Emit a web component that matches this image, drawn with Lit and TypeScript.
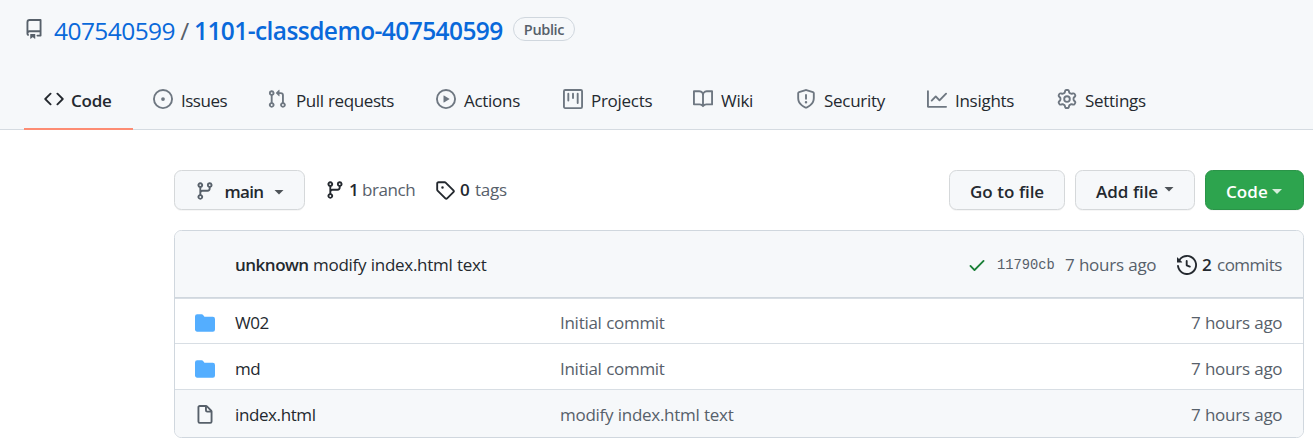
import { LitElement, html, css, svg, nothing } from "lit";
import { customElement, property } from "lit/decorators.js";

const ICONS: Record<string, string> = {
  repo: "M2 2.5A2.5 2.5 0 014.5 0h8.75a.75.75 0 01.75.75v12.5a.75.75 0 01-.75.75h-2.5a.75.75 0 110-1.5h1.75v-2h-8a1 1 0 00-.714 1.7.75.75 0 01-1.072 1.05A2.495 2.495 0 012 11.5v-9zm10.5-1V9h-8c-.356 0-.694.074-1 .208V2.5a1 1 0 011-1h8zM5 12.25v3.25a.25.25 0 00.4.2l1.45-1.087a.25.25 0 01.3 0L8.6 15.7a.25.25 0 00.4-.2v-3.25a.25.25 0 00-.25-.25h-3.5a.25.25 0 00-.25.25z",
  code: "M4.72 3.22a.75.75 0 011.06 1.06L2.06 8l3.72 3.72a.75.75 0 11-1.06 1.06L.47 8.53a.75.75 0 010-1.06l4.25-4.25zm6.56 0a.75.75 0 10-1.06 1.06L13.94 8l-3.72 3.72a.75.75 0 101.06 1.06l4.25-4.25a.75.75 0 000-1.06l-4.25-4.25z",
  issue: "M8 9.5a1.5 1.5 0 100-3 1.5 1.5 0 000 3zM8 0a8 8 0 100 16A8 8 0 008 0zM1.5 8a6.5 6.5 0 1113 0 6.5 6.5 0 01-13 0z",
  pull: "M7.177 3.073L9.573.677A.25.25 0 0110 .854v4.792a.25.25 0 01-.427.177L7.177 3.427a.25.25 0 010-.354zM3.75 2.5a.75.75 0 100 1.5.75.75 0 000-1.5zm-2.25.75a2.25 2.25 0 113 2.122v5.256a2.251 2.251 0 11-1.5 0V5.372A2.25 2.25 0 011.5 3.25zM11 2.5h-1V4h1a1 1 0 011 1v5.628a2.251 2.251 0 101.5 0V5A2.5 2.5 0 0011 2.5zm1 10.25a.75.75 0 111.5 0 .75.75 0 01-1.5 0zM3.75 12a.75.75 0 100 1.5.75.75 0 000-1.5z",
  play: "M1.5 8a6.5 6.5 0 1113 0 6.5 6.5 0 01-13 0zM8 0a8 8 0 100 16A8 8 0 008 0zM6.379 5.227A.25.25 0 006 5.442v5.117a.25.25 0 00.379.214l4.264-2.559a.25.25 0 000-.428L6.379 5.227z",
  project: "M1.75 0A1.75 1.75 0 000 1.75v12.5C0 15.216.784 16 1.75 16h12.5A1.75 1.75 0 0016 14.25V1.75A1.75 1.75 0 0014.25 0H1.75zM1.5 1.75a.25.25 0 01.25-.25h12.5a.25.25 0 01.25.25v12.5a.25.25 0 01-.25.25H1.75a.25.25 0 01-.25-.25V1.75zM11.75 3a.75.75 0 00-.75.75v7.5a.75.75 0 001.5 0v-7.5a.75.75 0 00-.75-.75zm-8.25.75a.75.75 0 011.5 0v5.5a.75.75 0 01-1.5 0v-5.5zM8 3a.75.75 0 00-.75.75v3.5a.75.75 0 001.5 0v-3.5A.75.75 0 008 3z",
  book: "M0 1.75A.75.75 0 01.75 1h4.253c1.227 0 2.317.59 3 1.501A3.744 3.744 0 0111.006 1h4.245a.75.75 0 01.75.75v10.5a.75.75 0 01-.75.75h-4.507a2.25 2.25 0 00-1.591.659l-.622.621a.75.75 0 01-1.06 0l-.622-.621A2.25 2.25 0 005.258 13H.75a.75.75 0 01-.75-.75V1.75zm8.755 3a2.25 2.25 0 012.25-2.25H14.5v9h-3.757c-.71 0-1.4.201-1.992.572l.004-7.322zm-1.504 7.324l.004-5.073-.002-2.253A2.25 2.25 0 005.003 2.5H1.5v9h3.757a3.75 3.75 0 011.994.574z",
  shield: "M7.467.133a1.75 1.75 0 011.066 0l5.25 1.68A1.75 1.75 0 0115 3.48V7c0 1.566-.32 3.182-1.303 4.682-.983 1.498-2.585 2.813-5.032 3.855a1.7 1.7 0 01-1.33 0c-2.447-1.042-4.049-2.357-5.032-3.855C1.32 10.182 1 8.566 1 7V3.48a1.75 1.75 0 011.217-1.667l5.25-1.68zm.61 1.429a.25.25 0 00-.153 0l-5.25 1.68a.25.25 0 00-.174.238V7c0 1.358.275 2.666 1.057 3.86.784 1.194 2.121 2.34 4.366 3.297a.2.2 0 00.154 0c2.245-.956 3.582-2.104 4.366-3.298C13.225 9.666 13.5 8.36 13.5 7V3.48a.25.25 0 00-.174-.237l-5.25-1.68zM9 10.5a1 1 0 11-2 0 1 1 0 012 0zm-.25-5.75a.75.75 0 10-1.5 0v3a.75.75 0 001.5 0v-3z",
  graph: "M1.5 1.75a.75.75 0 00-1.5 0v12.5c0 .414.336.75.75.75h14.5a.75.75 0 000-1.5H1.5V1.75zm14.28 2.53a.75.75 0 00-1.06-1.06L10 7.94 7.53 5.47a.75.75 0 00-1.06 0L3.22 8.72a.75.75 0 001.06 1.06L7 7.06l2.47 2.47a.75.75 0 001.06 0l5.25-5.25z",
  gear: "M7.429 1.525a6.593 6.593 0 011.142 0c.036.003.108.036.137.146l.289 1.105c.147.56.55.967.997 1.189.174.086.341.183.501.29.417.278.97.423 1.53.27l1.102-.303c.11-.03.175.016.195.046.219.31.41.641.573.989.014.031.022.11-.059.19l-.815.806c-.411.406-.562.957-.53 1.456a4.588 4.588 0 010 .582c-.032.499.119 1.05.53 1.456l.815.806c.08.08.073.159.059.19a6.494 6.494 0 01-.573.99c-.02.029-.086.074-.195.045l-1.103-.303c-.559-.153-1.112-.008-1.529.27-.16.107-.327.204-.5.29-.449.222-.851.628-.998 1.189l-.289 1.105c-.029.11-.101.143-.137.146a6.613 6.613 0 01-1.142 0c-.036-.003-.108-.037-.137-.146l-.289-1.105c-.147-.56-.55-.967-.997-1.189a4.502 4.502 0 01-.501-.29c-.417-.278-.97-.423-1.53-.27l-1.102.303c-.11.03-.175-.016-.195-.046a6.492 6.492 0 01-.573-.989c-.014-.031-.022-.11.059-.19l.815-.806c.411-.406.562-.957.53-1.456a4.587 4.587 0 010-.582c.032-.499-.119-1.05-.53-1.456l-.815-.806c-.08-.08-.073-.159-.059-.19a6.44 6.44 0 01.573-.99c.02-.029.086-.075.195-.045l1.103.303c.559.153 1.112.008 1.529-.27.16-.107.327-.204.5-.29.449-.222.851-.628.998-1.189l.289-1.105c.029-.11.101-.143.137-.146zM8 0c-.236 0-.47.01-.701.03-.743.065-1.29.615-1.458 1.261l-.29 1.106c-.017.066-.078.158-.211.224a5.994 5.994 0 00-.668.386c-.123.082-.233.09-.3.071L3.27 2.776c-.644-.177-1.392.02-1.82.63a7.977 7.977 0 00-.704 1.217c-.315.675-.111 1.422.363 1.891l.815.806c.05.048.098.147.088.294a6.084 6.084 0 000 .772c.01.147-.038.246-.088.294l-.815.806c-.474.469-.678 1.216-.363 1.891.2.428.436.835.704 1.218.428.609 1.176.806 1.82.63l1.103-.303c.066-.019.176-.011.299.071.213.143.436.272.668.386.133.066.194.158.212.224l.289 1.106c.169.646.715 1.196 1.458 1.26a8.094 8.094 0 001.402 0c.743-.064 1.29-.614 1.458-1.26l.29-1.106c.017-.066.078-.158.211-.224a5.98 5.98 0 00.668-.386c.123-.082.233-.09.3-.071l1.102.302c.644.177 1.392-.02 1.82-.63.268-.382.505-.789.704-1.217.315-.675.111-1.422-.364-1.891l-.814-.806c-.05-.048-.098-.147-.088-.294a6.1 6.1 0 000-.772c-.01-.147.039-.246.088-.294l.814-.806c.475-.469.679-1.216.364-1.891a7.992 7.992 0 00-.704-1.218c-.428-.609-1.176-.806-1.82-.63l-1.103.303c-.066.019-.176.011-.299-.071a5.991 5.991 0 00-.668-.386c-.133-.066-.194-.158-.212-.224L10.16 1.29C9.99.645 9.444.095 8.701.031A8.094 8.094 0 008 0zm1.5 8a1.5 1.5 0 11-3 0 1.5 1.5 0 013 0zM11 8a3 3 0 11-6 0 3 3 0 016 0z",
  branch: "M11.75 2.5a.75.75 0 100 1.5.75.75 0 000-1.5zm-2.25.75a2.25 2.25 0 113 2.122V6A2.5 2.5 0 0110 8.5H6a1 1 0 00-1 1v1.128a2.251 2.251 0 11-1.5 0V5.372a2.25 2.25 0 111.5 0v1.836A2.492 2.492 0 016 7h4a1 1 0 001-1v-.628A2.25 2.25 0 019.5 3.25zM4.25 12a.75.75 0 100 1.5.75.75 0 000-1.5zM3.5 3.25a.75.75 0 111.5 0 .75.75 0 01-1.5 0z",
  tag: "M2.5 7.775V2.75a.25.25 0 01.25-.25h5.025a.25.25 0 01.177.073l6.25 6.25a.25.25 0 010 .354l-5.025 5.025a.25.25 0 01-.354 0l-6.25-6.25a.25.25 0 01-.073-.177zm-1.5 0V2.75C1 1.784 1.784 1 2.75 1h5.025c.464 0 .91.184 1.238.513l6.25 6.25a1.75 1.75 0 010 2.474l-5.026 5.026a1.75 1.75 0 01-2.474 0l-6.25-6.25A1.75 1.75 0 011 7.775zM6 5a1 1 0 100 2 1 1 0 000-2z",
  check: "M13.78 4.22a.75.75 0 010 1.06l-7.25 7.25a.75.75 0 01-1.06 0L2.22 9.28a.75.75 0 011.06-1.06L6 10.94l6.72-6.72a.75.75 0 011.06 0z",
  history: "M1.643 3.143L.427 1.927A.25.25 0 000 2.104V5.75c0 .138.112.25.25.25h3.646a.25.25 0 00.177-.427L2.715 4.215a6.5 6.5 0 11-1.18 4.458.75.75 0 10-1.493.154 8.001 8.001 0 101.6-5.684zM7.75 4a.75.75 0 01.75.75v2.992l2.028.812a.75.75 0 01-.557 1.392l-2.5-1A.75.75 0 017 8.25v-3.5A.75.75 0 017.75 4z",
  folder: "M1.75 1A1.75 1.75 0 000 2.75v10.5C0 14.216.784 15 1.75 15h12.5A1.75 1.75 0 0016 13.25v-8.5A1.75 1.75 0 0014.25 3h-6.5a.25.25 0 01-.2-.1l-.9-1.2c-.33-.44-.85-.7-1.4-.7h-3.5z",
  file: "M3.75 1.5a.25.25 0 00-.25.25v11.5c0 .138.112.25.25.25h8.5a.25.25 0 00.25-.25V6H9.75A1.75 1.75 0 018 4.25V1.5H3.75zm5.75.56v2.19c0 .138.112.25.25.25h2.19L9.5 2.06zM2 1.75C2 .784 2.784 0 3.75 0h5.086c.464 0 .909.184 1.237.513l3.414 3.414c.329.328.513.773.513 1.237v8.086A1.75 1.75 0 0112.25 15h-8.5A1.75 1.75 0 012 13.25V1.75z",
};

@customElement("oct-icon")
class OctIcon extends LitElement {
  @property() name = "";
  static styles = css`
    :host { display: block; flex: none; width: 20px; height: 20px; }
    svg { display: block; width: 20px; height: 20px; fill: currentColor; }
  `;
  render() {
    return html`<svg viewBox="0 0 16 16" aria-hidden="true">${svg`<path fill-rule="evenodd" d=${ICONS[this.name]}></path>`}</svg>`;
  }
}

const TABS = [
  ["code", "Code"],
  ["issue", "Issues"],
  ["pull", "Pull requests"],
  ["play", "Actions"],
  ["project", "Projects"],
  ["book", "Wiki"],
  ["shield", "Security"],
  ["graph", "Insights"],
  ["gear", "Settings"],
];

const FILES = [
  { icon: "folder", name: "W02", message: "Initial commit" },
  { icon: "folder", name: "md", message: "Initial commit" },
  { icon: "file", name: "index.html", message: "modify index.html text" },
];

@customElement("app-root")
class AppRoot extends LitElement {
  static styles = css`
    :host {
      display: block;
      height: 447px;
      overflow: hidden;
      background: #fff;
      color: #24292f;
      font: 400 17px/26px "Open Sans", "Noto Sans", sans-serif;
      letter-spacing: -0.28px;
      word-spacing: 0.4px;
      white-space: nowrap;
    }
    * { box-sizing: border-box; }
    b { font-weight: 600; letter-spacing: -0.5px; }
    .head { height: 130px; background: #f6f8fa; border-bottom: 1px solid #d5dbe1; }
    .title { display: flex; height: 71px; padding: 0 24px; }
    .title oct-icon { margin: 19px 10px 0 0; color: #57606a; }
    .path { display: flex; font-size: 24.5px; line-height: 36px; margin-top: 13px; }
    .owner { width: 121px; color: #0969da; letter-spacing: -0.57px; }
    .slash { width: 19px; text-align: center; color: #57606a; }
    .name { width: 309px; color: #0969da; font-weight: 600; letter-spacing: -0.58px; }
    .pill {
      display: flex; justify-content: center; align-items: center;
      width: 62px; height: 24px; margin: 17px 0 0 10px; padding-top: 1px;
      border: 1px solid #d0d7de; border-radius: 12px;
      color: #57606a; font-size: 14.5px; font-weight: 600; letter-spacing: -0.35px;
    }
    nav {
      display: grid; height: 59px; padding-left: 24px;
      grid-template-columns: 109px 114px 169px 127px 130px 103px 131px 130px 131px;
    }
    .tab { display: flex; padding: 18px 0 0 20px; height: 59px; }
    .tab oct-icon { color: #6e7781; margin-right: 8px; }
    .tab span { margin-top: -1px; }
    .tab:nth-child(2) { letter-spacing: -0.5px; }
    .tab:nth-child(3) { letter-spacing: -0.4px; }
    .tab:nth-child(3) oct-icon { margin-right: 9px; }
    .tab.on { border-bottom: 2px solid #fd8c73; font-weight: 600; letter-spacing: -0.25px; }
    .tab.on oct-icon { color: #24292f; margin-right: 7px; }
    .main { padding: 40px 9px 0 174px; }
    .bar { display: flex; height: 40px; margin-bottom: 20px; }
    .btn {
      display: flex; align-items: center; height: 40px; padding: 3px 0 0 20px;
      border: 1px solid #d5d8da; border-radius: 7.5px; background: #f6f8fa;
      box-shadow: 0 1px 0 rgba(27, 31, 36, 0.04);
      font-weight: 600; letter-spacing: -0.08px;
    }
    .btn oct-icon { color: #57606a; margin: -1px 9.5px 0 0; }
    .caret {
      width: 10px; height: 5px; margin-left: 4px; background: currentColor; opacity: 0.8;
      clip-path: polygon(0 0, 100% 0, 50% 100%);
    }
    .ref { width: 131px; letter-spacing: -0.7px; }
    .ref .label { width: 40px; }
    .ref .caret { margin-left: 9.5px; margin-top: 1px; }
    .stat { display: flex; align-items: center; height: 40px; color: #57606a; }
    .stat oct-icon { color: #24292f; }
    .stat b { color: #24292f; width: 13px; }
    .branches { width: 110px; margin-left: 20px; letter-spacing: -0.4px; }
    .branches b { margin-left: 4px; }
    .tags b { width: 15px; margin-left: 5px; }
    .goto { width: 116px; margin-left: auto; }
    .add { width: 120px; margin-left: 10px; }
    .add .label { width: 64px; }
    .add .caret { margin-top: -5px; }
    .clone { width: 99px; margin-left: 10px; color: #fff; background: #2da44e; border-color: #2a9448; letter-spacing: 0.05px; }
    .clone .label { width: 42px; }
    .box { height: 208px; border: 1px solid #d0d7de; border-radius: 7.5px; overflow: hidden; }
    .latest {
      display: flex; align-items: center; height: 67px; padding: 2px 20px 0 60px;
      background: #f6f8fa; border-bottom: 1px solid #d0d7de;
    }
    .author { width: 78px; }
    .side { display: flex; align-items: center; margin-left: auto; color: #57606a; }
    .check { color: #1a7f37; }
    .sha { width: 68px; margin-left: 10px; padding-top: 2px; font: 13.75px/20px "Liberation Mono", monospace; letter-spacing: 0; }
    .age { width: 92px; }
    .hist { margin-left: 20px; color: #24292f; }
    .side b { width: 15px; margin-left: 5px; color: #24292f; }
    .commits { width: 66px; letter-spacing: -0.5px; }
    .row {
      display: grid; grid-template-columns: 40px 325px 1fr 92px;
      height: 46px; padding: 15px 20px 0; border-top: 1px solid #d8dee4;
      line-height: 20px; color: #57606a;
    }
    .row:nth-child(2) { height: 45px; padding-top: 14px; }
    .row:last-child { height: 48px; background: #f6f8fa; }
    .file { color: #24292f; letter-spacing: -0.4px; }
    .folder { color: #54aeff; }
  `;

  render() {
    return html`
      <header class="head">
        <div class="title">
          <oct-icon name="repo"></oct-icon>
          <div class="path">
            <span class="owner">407540599</span><span class="slash">/</span><span class="name">1101-classdemo-407540599</span>
          </div>
          <span class="pill">Public</span>
        </div>
        <nav>
          ${TABS.map(([icon, label], i) => html`
            <div class="tab ${i === 0 ? "on" : ""}"><oct-icon name=${icon}></oct-icon><span>${label}</span></div>`)}
        </nav>
      </header>
      <main class="main">
        <div class="bar">
          <div class="btn ref"><oct-icon name="branch"></oct-icon><span class="label">main</span><i class="caret"></i></div>
          <div class="stat branches"><oct-icon name="branch"></oct-icon><b>1</b><span>branch</span></div>
          <div class="stat tags"><oct-icon name="tag"></oct-icon><b>0</b><span>tags</span></div>
          <div class="btn goto">Go to file</div>
          <div class="btn add"><span class="label">Add file</span><i class="caret"></i></div>
          <div class="btn clone"><span class="label">Code</span><i class="caret"></i></div>
        </div>
        <div class="box">
          <div class="latest">
            <b class="author">unknown</b><span>modify index.html text</span>
            <div class="side">
              <oct-icon class="check" name="check"></oct-icon>
              <span class="sha">11790cb</span>
              <span class="age">7 hours ago</span>
              <oct-icon class="hist" name="history"></oct-icon>
              <b>2</b><span class="commits">commits</span>
            </div>
          </div>
          ${FILES.map((f) => html`
            <div class="row">
              <oct-icon class=${f.icon === "folder" ? "folder" : nothing} name=${f.icon}></oct-icon>
              <span class="file">${f.name}</span>
              <span>${f.message}</span>
              <span class="age">7 hours ago</span>
            </div>`)}
        </div>
      </main>
    `;
  }
}
